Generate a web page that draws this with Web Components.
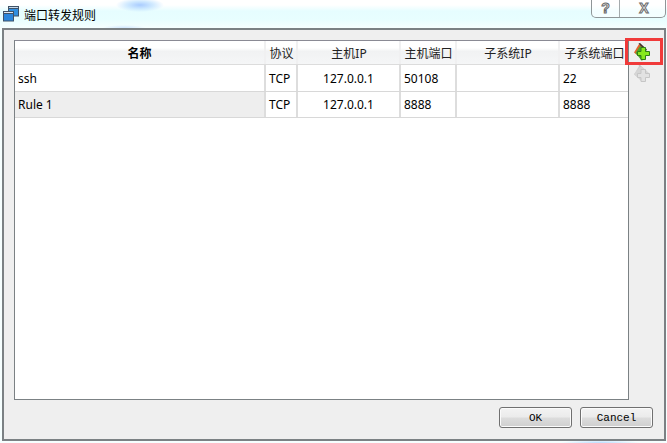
<!DOCTYPE html>
<html>
<head>
<meta charset="utf-8">
<title>端口转发规则</title>
<style>
  html, body { margin: 0; padding: 0; height: 100%; overflow: hidden; }
  port-dialog { height: 443px; }
</style>
</head>
<body>
<port-dialog dialog-title="端口转发规则">
  <rule-table></rule-table>
  <tool-button slot="tools" kind="add" marked></tool-button>
  <tool-button slot="tools" kind="remove"></tool-button>
  <push-button slot="buttons">OK</push-button>
  <push-button slot="buttons">Cancel</push-button>
</port-dialog>

<script>
const UI_FONT = `"Noto Sans", "Noto Sans CJK SC", sans-serif`;

class PortDialog extends HTMLElement {
  constructor() {
    super();
    this.attachShadow({ mode: "open" });
  }

  connectedCallback() {
    this.shadowRoot.innerHTML = `
      <style>
      :host {
        display: flex;
        flex-direction: column;
        box-sizing: border-box;
        width: 667px;
        position: relative;
        overflow: hidden;
        font: 12px ${UI_FONT};
        color: #000;
        background:
          radial-gradient(ellipse 24px 7px at 140px 5px, #a9ccff 0%, rgba(190,225,255,.7) 55%, transparent 100%),
          radial-gradient(ellipse 22px 3px at 124px 28px, #cfe6ff 0%, transparent 100%),
          radial-gradient(ellipse 40px 3px at 600px 443px, #b9dcff 0%, transparent 100%),
          linear-gradient(to bottom, #fff 0, #fff 5px, #e6fdff 11px, #e8feff 20px, #f6ffff 28px);
      }
      .titlebar {
        display: flex;
        align-items: center;
        gap: 5px;
        height: 28px;
        flex: none;
        padding: 0 0 0 3px;
        box-sizing: border-box;
      }
      .titlebar span { font-size: 12px; font-family: "Noto Sans CJK SC", sans-serif; }
      .caption {
        position: absolute;
        top: -1px;
        right: 1px;
        width: 75px;
        height: 19px;
        display: flex;
        box-sizing: border-box;
        border: 1px solid #8f9698;
        border-top: 0;
        border-radius: 0 0 5px 5px;
        background: rgba(255,255,255,.55);
      }
      .caption div {
        display: flex;
        align-items: center;
        justify-content: center;
        font: bold 14px "Liberation Sans", sans-serif;
        color: #f4f4f4;
        -webkit-text-stroke: 1px #6a6a6a;
      }
      .caption .help { width: 27px; border-right: 1px solid #a4abad; }
      .caption .close { flex: 1; padding-left: 3px; }
      .panel {
        flex: 1;
        display: flex;
        flex-direction: column;
        margin: 0 1px 2px 2px;
        padding: 10px 11px 11px 10px;
        border: 2px solid #7b8184;
        background: #efefef;
        min-height: 0;
      }
      .content { flex: 1; display: flex; min-height: 0; }
      .content ::slotted(rule-table) { flex: none; }
      .tools {
        flex: 1;
        display: flex;
        flex-direction: column;
        align-items: flex-start;
        padding-left: 4px;
      }
      .buttons {
        display: flex;
        justify-content: flex-end;
        gap: 8px;
        padding: 7px 0 0 0;
      }
      </style>
      <div class="titlebar">
        <svg width="16" height="16" viewBox="0 0 16 16">
          <rect x="5.5" y="0.5" width="10" height="9.5" fill="#2f8fe0" stroke="#3f5268"/>
          <rect x="5.5" y="0.5" width="10" height="2" fill="#c4d8ea" stroke="#3f5268"/>
          <rect x="0.5" y="5.5" width="10" height="9.5" fill="#2a86dc" stroke="#3f5268"/>
          <rect x="0.5" y="5.5" width="10" height="2" fill="#dce8f2" stroke="#3f5268"/>
        </svg>
        <span>${this.getAttribute("dialog-title")}</span>
      </div>
      <div class="caption">
        <div class="help">?</div>
        <div class="close">X</div>
      </div>
      <div class="panel">
        <div class="content">
          <slot></slot>
          <div class="tools"><slot name="tools"></slot></div>
        </div>
        <div class="buttons"><slot name="buttons"></slot></div>
      </div>
    `;
  }
}

class RuleTable extends HTMLElement {
  constructor() {
    super();
    this.attachShadow({ mode: "open" });
    this.columns = [
      { title: "名称", bold: true },
      { title: "协议" },
      { title: "主机IP" },
      { title: "主机端口" },
      { title: "子系统IP" },
      { title: "子系统端口" },
    ];
    this.rules = [
      ["ssh", "TCP", "127.0.0.1", "50108", "", "22"],
      ["Rule 1", "TCP", "127.0.0.1", "8888", "", "8888"],
    ];
  }

  connectedCallback() {
    const head = this.columns
      .map((col) => `<div class="th ${col.bold ? "bold" : ""}">${col.title}</div>`)
      .join("");
    const rows = this.rules
      .map((rule, i) => `
        <div class="row ${i % 2 ? "alt" : ""}">
          ${rule.map((text, c) => `<div class="td ${c === 2 ? "center" : ""}">${text}</div>`).join("")}
        </div>`)
      .join("");

    this.shadowRoot.innerHTML = `
      <style>
      :host {
        display: block;
        box-sizing: border-box;
        width: 615px;
        height: 360px;
        background: #fff;
        border: 1px solid #7b8184;
        border-top-color: #8a8a94;
        font: 12px ${UI_FONT};
      }
      .head, .row {
        display: grid;
        grid-template-columns: 251px 32px 103px 56px 103px 68px;
      }
      .head {
        height: 24px;
        box-sizing: border-box;
        background: linear-gradient(to bottom, #fff 0, #fff 30%, #f1f2f3 45%, #f5f6f7 100%);
        border-bottom: 1px solid #dcdcdc;
      }
      .th {
        display: flex;
        align-items: center;
        justify-content: center;
        padding-left: 1px;
        border-right: 2px solid #f0f0f1;
        box-sizing: border-box;
        white-space: nowrap;
        color: #222;
      }
      .th:last-child { border-right: 0; }
      .th.bold { font-weight: bold; color: #000; padding-left: 0; }
      .row { height: 26.5px; box-sizing: border-box; border-bottom: 1px solid #d8d8d8; }
      .row.alt { background: linear-gradient(to right, #eeeeee 0, #eeeeee 250px, #fff 250px); }
      .td {
        display: flex;
        align-items: center;
        padding: 1px 0 0 3px;
        box-sizing: border-box;
        border-right: 2px solid #dddddd;
        white-space: nowrap;
      }
      .td:last-child { border-right: 0; }
      .td.center { justify-content: center; padding-left: 0; }
      </style>
      <div class="head">${head}</div>
      ${rows}
    `;
  }
}

class ToolButton extends HTMLElement {
  constructor() {
    super();
    this.attachShadow({ mode: "open" });
  }

  connectedCallback() {
    const disabled = this.getAttribute("kind") === "remove";
    const c = disabled
      ? { spine: "#bdbdbd", edge: "#cfcfcf", page: "#d6d6d6", plus: "#e2e2e2", line: "#c6c6c6" }
      : { spine: "#40302a", edge: "#e3622b", page: "#4fa32f", plus: "#86e81c", line: "#2f7d17" };
    // the grey one is a full diamond, the plus barely shows on it
    const page = disabled
      ? "M1 10 L8 2 L16 9 L9 18 Z"
      : "M2.5 11 L7 4 L14 9 L9 19 Z";
    this.shadowRoot.innerHTML = `
      <style>
      :host { display: block; position: relative; width: 20px; height: 21px; margin-top: 1px; }
      svg { display: block; margin-top: 1px; }
      .mark {
        position: absolute;
        left: -8px;
        top: -3px;
        width: 32px;
        height: 21px;
        border: 3px solid #f03a3a;
      }
      </style>
      <svg width="20" height="20" viewBox="0 0 20 20">
        <path d="M1 10.5 L6 2 L9 4 L4 13 Z" fill="${c.edge}"/>
        <path d="M5.5 1.5 L7 1 L14 7.5 L12.5 9 Z" fill="${c.spine}"/>
        <path d="${page}" fill="${c.page}"/>
        <path d="M8 5.5 H12.5 V9.5 H16.5 V13.5 H12.5 V17.5 H8 V13.5 H4.5 V9.5 H8 Z"
          fill="${c.plus}" stroke="${c.line}" stroke-width="1"/>
      </svg>
      ${this.hasAttribute("marked") ? `<div class="mark"></div>` : ""}
    `;
  }
}

class PushButton extends HTMLElement {
  constructor() {
    super();
    this.attachShadow({ mode: "open" });
  }

  connectedCallback() {
    this.shadowRoot.innerHTML = `
      <style>
      :host {
        display: flex;
        align-items: center;
        justify-content: center;
        box-sizing: border-box;
        width: 73px;
        height: 21px;
        border: 1px solid #707070;
        border-radius: 3px;
        box-shadow: inset 0 0 0 1px #fbfbfb;
        background: linear-gradient(to bottom, #f3f3f3 0, #ebebeb 48%, #dcdcdc 52%, #cfcfcf 100%);
        font: 11px "Liberation Mono", monospace;
        color: #000;
      }
      </style>
      <slot></slot>
    `;
  }
}

customElements.define("port-dialog", PortDialog);
customElements.define("rule-table", RuleTable);
customElements.define("tool-button", ToolButton);
customElements.define("push-button", PushButton);
</script>
</body>
</html>
